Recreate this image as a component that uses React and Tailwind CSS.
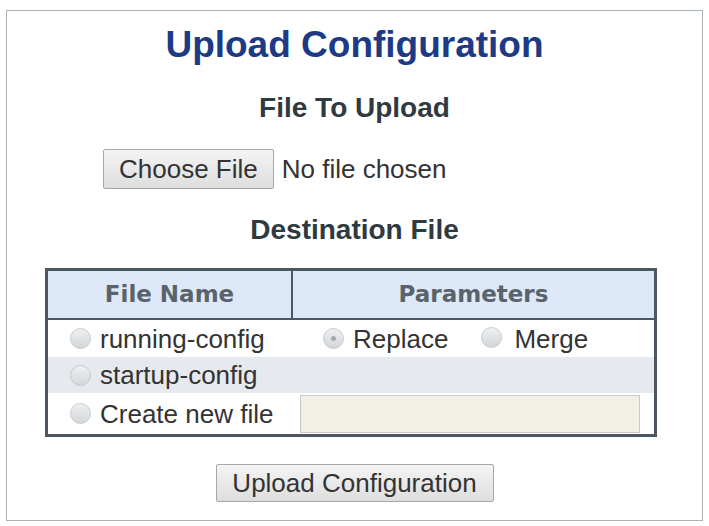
import React, { useState } from "react";

const Radio = ({ checked }) => (
  <span className="relative inline-block w-[21px] h-[21px] rounded-full border border-[#c6cacf] bg-gradient-to-b from-[#eef0f2] to-[#d3d6d9] shrink-0">
    {checked && (
      <span className="absolute left-[7px] top-[7px] w-[5px] h-[5px] rounded-full bg-[#a5a9ad]" />
    )}
  </span>
);

const App = () => {
  const [dest, setDest] = useState("");

  return (
    <div className="w-[709px] h-[526px] bg-white pt-[10px] pl-[6px]" style={{ fontFamily: '"Liberation Sans", Arial, sans-serif' }}>
      <div className="w-[697px] h-[511px] border border-[#aab3ba] flex flex-col items-center">
        <h1 className="mt-[16px] text-[37px] leading-[36px] font-bold text-[#1d3a86]">Upload Configuration</h1>
        <h2 className="mt-[31px] text-[28px] leading-[28px] font-bold text-[#2f3a40]">File To Upload</h2>

        <div className="self-start ml-[96px] mt-[27px] flex items-center h-[40px]">
          <button className="h-[40px] px-[15px] text-[26px] leading-none text-[#333] border border-[#a7a7a7] rounded-[2px] bg-gradient-to-b from-[#f4f4f4] to-[#dedede]">
            Choose File
          </button>
          <span className="ml-[8px] text-[26px] leading-none text-[#333]">No file chosen</span>
        </div>

        <h2 className="mt-[27px] text-[28px] leading-[28px] font-bold text-[#2f3a40]">Destination File</h2>

        <div className="self-start ml-[38px] mt-[24px] w-[612px] border-[3px] border-[#4b5864] text-[26px] leading-none text-[#333]">
          <div className="flex h-[49px] bg-[#dde9f8] border-b-[2px] border-[#4b5864] text-[23px] font-bold text-[#5a636b]" style={{ fontFamily: '"DejaVu Sans", Verdana, sans-serif' }}>
            <div className="w-[245px] border-r-[2px] border-[#4b5864] flex items-center justify-center">File Name</div>
            <div className="flex-1 flex items-center justify-center">Parameters</div>
          </div>

          <div className="flex h-[37px] items-center bg-white">
            <label className="w-[245px] flex items-center pl-[22px] gap-[9px]" onClick={() => setDest("running")}>
              <Radio checked={dest === "running"} />
              <span>running-config</span>
            </label>
            <div className="flex items-center pl-[30px]">
              <Radio checked />
              <span className="ml-[9px]">Replace</span>
              <span className="ml-[33px]"><Radio /></span>
              <span className="ml-[12px]">Merge</span>
            </div>
          </div>

          <div className="flex h-[36px] items-center bg-[#e6eaee]">
            <label className="w-[245px] flex items-center pl-[22px] gap-[9px]" onClick={() => setDest("startup")}>
              <Radio checked={dest === "startup"} />
              <span>startup-config</span>
            </label>
          </div>

          <div className="flex h-[41px] items-center bg-white">
            <label className="w-[252px] flex items-center pl-[22px] gap-[9px] whitespace-nowrap" onClick={() => setDest("new")}>
              <Radio checked={dest === "new"} />
              <span>Create new file</span>
            </label>
            <input className="w-[340px] h-[38px] border border-[#c9c9c9] bg-[#f2efe5] outline-none" />
          </div>
        </div>

        <button className="mt-[27px] h-[38px] w-[278px] text-[26px] leading-none text-[#333] border border-[#a7a7a7] rounded-[2px] bg-gradient-to-b from-[#f4f4f4] to-[#dedede]">
          Upload Configuration
        </button>
      </div>
    </div>
  );
};

export default App;
